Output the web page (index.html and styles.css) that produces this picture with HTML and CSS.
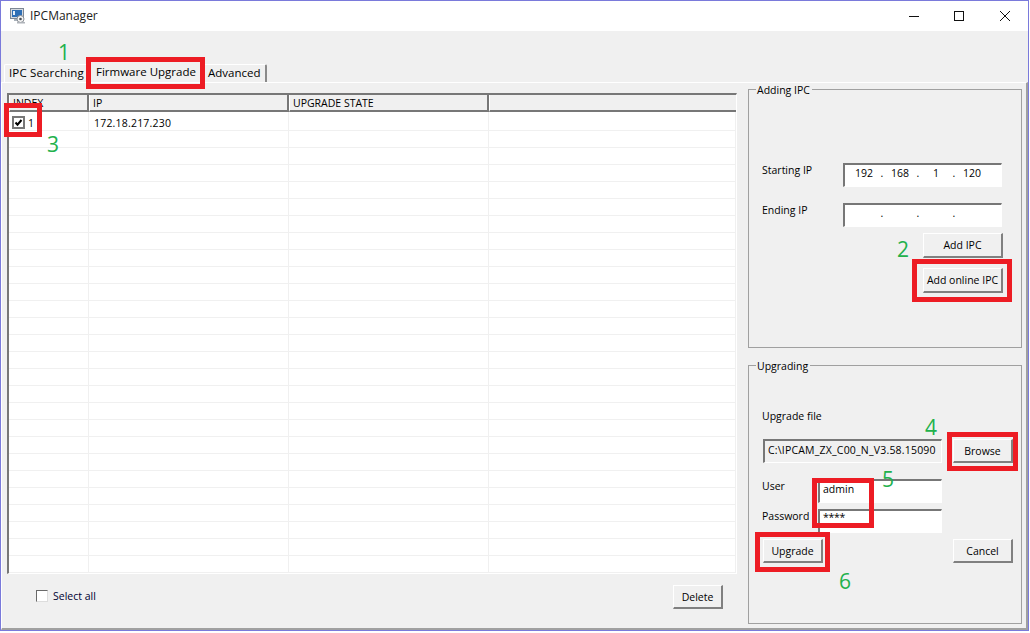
FILE: index.html
```html
<!DOCTYPE html>
<html>
<head>
<meta charset="utf-8">
<title>IPCManager</title>
<link rel="stylesheet" href="styles.css">
</head>
<body>
<div class="window">
  <header class="titlebar">
    <svg class="app-icon" width="16" height="16" viewBox="0 0 16 16"><rect x="0.5" y="0.5" width="13" height="10" fill="#d5dae0" stroke="#7d8794"/><rect x="2" y="2" width="10" height="7" fill="#2f6fb5"/><rect x="3" y="3" width="2" height="4" fill="#e6f0fa"/><path d="M4 11h6v2H4z" fill="#aab2bb"/><circle cx="10.5" cy="11" r="3.5" fill="#f4f4f4" stroke="#8a8f96"/><circle cx="10.5" cy="11" r="1.3" fill="#4a5058"/><rect x="7" y="14" width="8" height="1.5" fill="#b0b4ba"/></svg>
    <span class="app-title">IPCManager</span>
    <div class="win-controls">
      <svg class="win-btn" width="46" height="30" viewBox="0 0 46 30"><path d="M19 15.5h10" stroke="#111" fill="none"/></svg>
      <svg class="win-btn" width="46" height="30" viewBox="0 0 46 30"><rect x="18.5" y="10.5" width="9" height="9" stroke="#111" fill="none"/></svg>
      <svg class="win-btn" width="46" height="30" viewBox="0 0 46 30"><path d="M18 10l10 10M28 10L18 20" stroke="#111" fill="none"/></svg>
    </div>
  </header>
  <nav class="tabs">
    <div class="tab tab-first">IPC Searching</div>
    <div class="tab tab-active">Firmware Upgrade</div>
    <div class="tab tab-last">Advanced</div>
  </nav>
  <main class="panel">
    <section class="left">
      <div class="grid-wrap">
        <table class="grid">
          <thead>
            <tr><th class="c1">INDEX</th><th class="c2">IP</th><th class="c2">UPGRADE STATE</th><th class="c4"></th></tr>
          </thead>
          <tbody>
            <tr class="row-first"><td><span class="cell-check"><svg class="check" width="13" height="13" viewBox="0 0 13 13"><rect x="1" y="1" width="11" height="11" fill="#fff" stroke="#777" stroke-width="2"/><path d="M3.5 6.5l2 2.2L9.5 4" fill="none" stroke="#000" stroke-width="2"/></svg>1</span></td><td class="ip">172.18.217.230</td><td></td><td></td></tr>
            <tr><td></td><td></td><td></td><td></td></tr>
            <tr><td></td><td></td><td></td><td></td></tr>
            <tr><td></td><td></td><td></td><td></td></tr>
            <tr><td></td><td></td><td></td><td></td></tr>
            <tr><td></td><td></td><td></td><td></td></tr>
            <tr><td></td><td></td><td></td><td></td></tr>
            <tr><td></td><td></td><td></td><td></td></tr>
            <tr><td></td><td></td><td></td><td></td></tr>
            <tr><td></td><td></td><td></td><td></td></tr>
            <tr><td></td><td></td><td></td><td></td></tr>
            <tr><td></td><td></td><td></td><td></td></tr>
            <tr><td></td><td></td><td></td><td></td></tr>
            <tr><td></td><td></td><td></td><td></td></tr>
            <tr><td></td><td></td><td></td><td></td></tr>
            <tr><td></td><td></td><td></td><td></td></tr>
            <tr><td></td><td></td><td></td><td></td></tr>
            <tr><td></td><td></td><td></td><td></td></tr>
            <tr><td></td><td></td><td></td><td></td></tr>
            <tr><td></td><td></td><td></td><td></td></tr>
            <tr><td></td><td></td><td></td><td></td></tr>
            <tr><td></td><td></td><td></td><td></td></tr>
            <tr><td></td><td></td><td></td><td></td></tr>
            <tr><td></td><td></td><td></td><td></td></tr>
            <tr><td></td><td></td><td></td><td></td></tr>
            <tr><td></td><td></td><td></td><td></td></tr>
            <tr><td></td><td></td><td></td><td></td></tr>
            <tr><td></td><td></td><td></td><td></td></tr>
          </tbody>
        </table>
      </div>
      <div class="left-footer">
        <label class="select-all"><span class="box"></span>Select all</label>
        <div class="btn btn-delete">Delete</div>
      </div>
    </section>
    <aside class="right">
      <section class="group group-add">
        <div class="legend">Adding IPC</div>
        <div class="field-row">
          <span class="field-label">Starting IP</span>
          <div class="sunken ip-box"><span>192</span><i>.</i><span>168</span><i>.</i><span>1</span><i>.</i><span>120</span></div>
        </div>
        <div class="field-row">
          <span class="field-label">Ending IP</span>
          <div class="sunken ip-box"><span></span><i>.</i><span></span><i>.</i><span></span><i>.</i><span></span></div>
        </div>
        <div class="btn-stack">
          <div class="btn btn-wide">Add IPC</div>
          <div class="btn btn-wide">Add online IPC</div>
        </div>
      </section>
      <section class="group group-upgrade">
        <div class="legend">Upgrading</div>
        <div class="file-label">Upgrade file</div>
        <div class="file-row">
          <div class="sunken file-box">C:\IPCAM_ZX_C00_N_V3.58.15090</div>
          <div class="btn">Browse</div>
        </div>
        <div class="cred-row">
          <span class="cred-label">User</span>
          <div class="sunken cred-box">admin</div>
        </div>
        <div class="cred-row cred-row-pass">
          <span class="cred-label">Password</span>
          <div class="sunken cred-box cred-pass">****</div>
        </div>
        <div class="action-row">
          <div class="btn">Upgrade</div>
          <div class="btn">Cancel</div>
        </div>
      </section>
    </aside>
  </main>
  <div class="mark m-firmware"></div>
  <div class="mark m-index"></div>
  <div class="mark m-online"></div>
  <div class="mark m-browse"></div>
  <div class="mark m-cred"></div>
  <div class="mark m-upgrade"></div>
  <span class="num n1">1</span>
  <span class="num n2">2</span>
  <span class="num n3">3</span>
  <span class="num n4">4</span>
  <span class="num n5">5</span>
  <span class="num n6">6</span>
</div>
</body>
</html>
```
FILE: styles.css
```css
* { box-sizing: border-box; }
html, body { margin: 0; background: #fff; }
body { font: 10.5px/14px "Open Sans", "Liberation Sans", sans-serif; color: #000; }
.window { position: relative; width: 1029px; height: 631px; border: 1px solid #7a7adb; background: #f0f0f0; display: flex; flex-direction: column; overflow: hidden; }

.titlebar { height: 30px; background: #fff; display: flex; align-items: center; padding-left: 9px; flex: none; }
.app-icon { margin-right: 4px; }
.app-title { font-size: 12px; color: #222; }
.win-controls { margin-left: auto; display: flex; }
.win-btn { display: block; }

.tabs { height: 51px; flex: none; display: flex; align-items: flex-end; padding-left: 3px; font-size: 11.5px; }
.tab { height: 18px; line-height: 16px; background: #f0f0f0; }
.tab-first { width: 84px; padding-left: 4px; border-top: 1px solid #fff; border-left: 1px solid #fff; border-top-left-radius: 2px; letter-spacing: .15px; }
.tab-active { width: 116px; height: 21px; padding-left: 8px; line-height: 22px; }
.tab-last { width: 63px; padding-left: 4px; border-top: 1px solid #fff; border-right: 2px solid #8a8a8a; border-top-right-radius: 2px; }

.panel { flex: 1; display: flex; border-top: 1px solid #fff; border-left: 1px solid #fff; border-right: 2px solid #a0a0a0; border-bottom: 2px solid #a0a0a0; padding: 10px 0 0 5px; min-height: 0; }
.left { width: 730px; flex: none; }
.grid-wrap { height: 481px; border-top: 2px solid #777; border-left: 2px solid #777; border-bottom: 1px solid #fff; border-right: 1px solid #fff; background: #fff; overflow: hidden; }
.grid { border-collapse: separate; border-spacing: 0; table-layout: fixed; width: 727px; }
th, td { padding: 0; }
th { height: 17px; background: #f0f0f0; font-weight: 400; text-align: left; padding-left: 3px; border-left: 1px solid #fff; border-right: 2px solid #777; border-bottom: 2px solid #777; }
th.c1 { width: 80px; }
th.c2 { width: 200px; }
th.c4 { border-right: 0; }
td { height: 17px; border-right: 1px solid #f0f0f0; border-bottom: 1px solid #f0f0f0; }
.row-first td { height: 19px; padding-top: 3px; }
.cell-check { display: flex; align-items: center; gap: 3px; padding-left: 3px; }
.check { display: block; }
td.ip { padding-left: 5px; letter-spacing: .2px; }

.left-footer { display: flex; justify-content: space-between; padding: 11px 14px 0 29px; }
.select-all { display: flex; align-items: center; gap: 5px; height: 15px; margin-top: 3px; color: #000030; }
.box { width: 12px; height: 12px; background: #fff; border: 1px solid #696969; border-right-color: #ddd; border-bottom-color: #ddd; }

.btn { width: 60px; height: 24px; background: #f0f0f0; border-top: 1px solid #fff; border-left: 1px solid #fff; border-right: 2px solid #808080; border-bottom: 2px solid #808080; display: flex; align-items: center; justify-content: center; flex: none; }
.btn-delete { width: 50px; }
.btn-wide { width: 80px; height: 25px; }

.right { margin-left: 11px; margin-top: -4px; width: 274px; flex: none; display: flex; flex-direction: column; gap: 17px; }
.group { position: relative; border: 1px solid #a0a0a0; height: 259px; }
.legend { position: absolute; left: 7px; top: -7px; background: #f0f0f0; padding: 0 2px 0 1px; }
.group-add { padding: 73px 18px 0 13px; }
.field-row { display: flex; margin-bottom: 16px; }
.field-label { width: 81px; }
.sunken { background: #fff; border-top: 2px solid #777; border-left: 2px solid #777; border-right: 1px solid #fff; border-bottom: 1px solid #fff; }
.ip-box { width: 159px; height: 24px; display: flex; align-items: flex-start; padding-left: 4px; line-height: 16px; }
.ip-box span { width: 30px; text-align: center; }
.ip-box i { width: 6px; text-align: center; font-style: normal; }
.btn-stack { display: flex; flex-direction: column; align-items: flex-end; gap: 10px; margin-top: -10px; }

.group-upgrade { padding: 43px 8px 0 14px; }
.file-label { height: 16px; margin-left: -1px; margin-bottom: 14px; }
.file-row { display: flex; gap: 11px; margin-bottom: 16px; }
.file-box { width: 179px; height: 24px; background: #f0f0f0; padding-left: 3px; line-height: 18px; white-space: nowrap; overflow: hidden; letter-spacing: .2px; }
.cred-row { display: flex; margin-bottom: 6px; }
.cred-label { width: 55px; margin-left: -1px; margin-right: 1px; }
.cred-box { width: 124px; height: 24px; padding-left: 3px; line-height: 16px; }
.cred-pass { line-height: 12px; letter-spacing: -.3px; }
.action-row { display: flex; justify-content: space-between; }

.mark { position: absolute; border: 5px solid #ed1c24; pointer-events: none; }
.m-firmware { left: 85px; top: 56px; width: 119px; height: 32px; }
.m-index { left: 3px; top: 102px; width: 38px; height: 34px; }
.m-online { left: 911px; top: 258px; width: 100px; height: 43px; }
.m-browse { left: 946px; top: 431px; width: 71px; height: 39px; }
.m-cred { left: 811px; top: 477px; width: 62px; height: 50px; }
.m-upgrade { left: 754px; top: 531px; width: 75px; height: 40px; }

.num { position: absolute; font-size: 21px; line-height: 24px; color: #22b14c; }
.n1 { left: 57px; top: 39px; }
.n2 { left: 896px; top: 236px; }
.n3 { left: 46px; top: 131px; }
.n4 { left: 924px; top: 414px; }
.n5 { left: 881px; top: 466px; }
.n6 { left: 838px; top: 568px; }
```
